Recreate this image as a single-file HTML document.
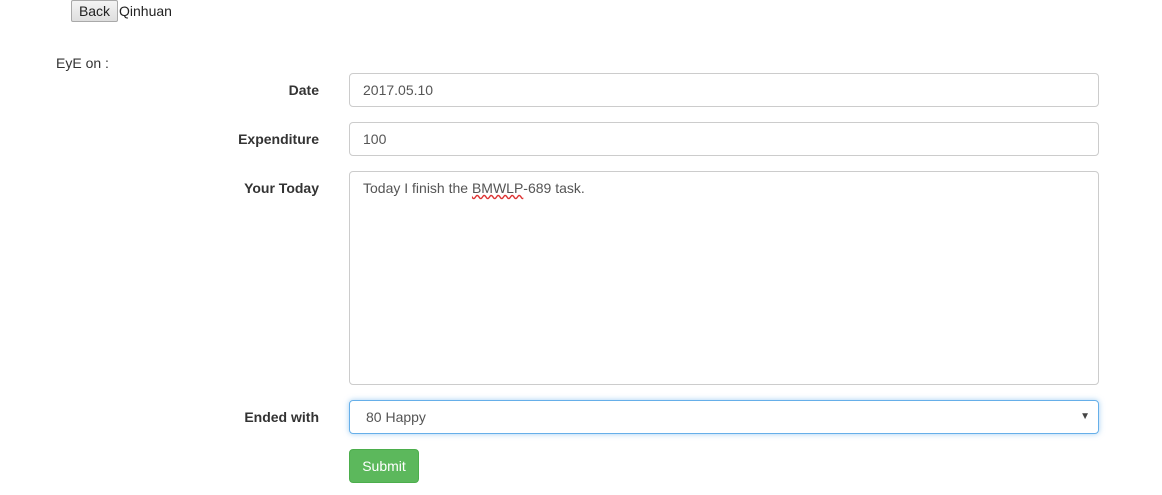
<!DOCTYPE html>
<html><head><style>
body{margin:0;width:1162px;height:495px;background:#fff;font-family:"Liberation Sans",sans-serif;font-size:14px;color:#333;position:relative;overflow:hidden}
.a{position:absolute}
.btn{left:71px;top:0;width:47px;height:22px;border:1px solid #a9a9a9;background:linear-gradient(#f4f4f4,#dedede);border-radius:2px;box-sizing:border-box;text-align:center;line-height:20px;font-size:14px;color:#222}
.lbl{font-weight:bold;text-align:right;width:200px;left:119px}
.in{left:349px;width:750px;border:1px solid #ccc;border-radius:4px;box-sizing:border-box;padding-left:13px;color:#555}
</style></head><body>
<div class="a btn">Back</div>
<div class="a" style="left:119px;top:3px;color:#222">Qinhuan</div>
<div class="a" style="left:56px;top:55px;color:#333">EyE on :</div>
<div class="a lbl" style="top:82px">Date</div>
<div class="a in" style="top:73px;height:34px;line-height:32px">2017.05.10</div>
<div class="a lbl" style="top:131px">Expenditure</div>
<div class="a in" style="top:122px;height:34px;line-height:32px">100</div>
<div class="a lbl" style="top:180px">Your Today</div>
<div class="a in" style="top:171px;height:214px;padding-top:8px">Today I finish the <span style="text-decoration:underline wavy #d33">BMWLP</span>-689 task.</div>
<div class="a lbl" style="top:409px">Ended with</div>
<div class="a in" style="top:400px;height:34px;line-height:32px;border-color:#66afe9;box-shadow:0 0 6px rgba(102,175,233,.6);padding-left:16px">80 Happy<span style="position:absolute;right:8px;font-size:10px;color:#444">▼</span></div>
<div class="a" style="left:349px;top:449px;width:70px;height:34px;background:#5cb85c;border:1px solid #4cae4c;border-radius:4px;box-sizing:border-box;color:#fff;text-align:center;line-height:32px">Submit</div>
</body></html>
